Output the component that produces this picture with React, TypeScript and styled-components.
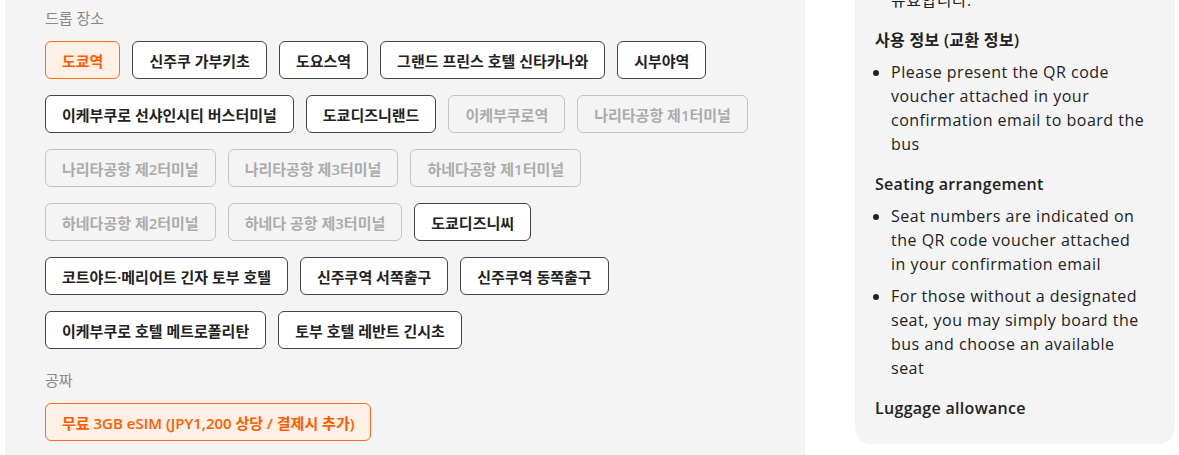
import React from 'react';
import styled, {createGlobalStyle, css} from 'styled-components';

type ChipState = 'default' | 'selected' | 'disabled';

interface ChipItem {
    label: string;
    state?: ChipState;
}

const dropOffs: ChipItem[] = [
    {label: '도쿄역', state: 'selected'},
    {label: '신주쿠 가부키초'},
    {label: '도요스역'},
    {label: '그랜드 프린스 호텔 신타카나와'},
    {label: '시부야역'},
    {label: '이케부쿠로 선샤인시티 버스터미널'},
    {label: '도쿄디즈니랜드'},
    {label: '이케부쿠로역', state: 'disabled'},
    {label: '나리타공항 제1터미널', state: 'disabled'},
    {label: '나리타공항 제2터미널', state: 'disabled'},
    {label: '나리타공항 제3터미널', state: 'disabled'},
    {label: '하네다공항 제1터미널', state: 'disabled'},
    {label: '하네다공항 제2터미널', state: 'disabled'},
    {label: '하네다 공항 제3터미널', state: 'disabled'},
    {label: '도쿄디즈니씨'},
    {label: '코트야드·메리어트 긴자 토부 호텔'},
    {label: '신주쿠역 서쪽출구'},
    {label: '신주쿠역 동쪽출구'},
    {label: '이케부쿠로 호텔 메트로폴리탄'},
    {label: '토부 호텔 레반트 긴시초'},
];

const freebies: ChipItem[] = [
    {label: '무료 3GB eSIM (JPY1,200 상당 / 결제시 추가)', state: 'selected'},
];

const GlobalStyle = createGlobalStyle`
  body {
    margin: 0;
    background: #ffffff;
    font-family: "Open Sans", "Noto Sans CJK KR", sans-serif;
    color: #222222;
  }
`;

const Page = styled.div`
  display: flex;
  align-items: flex-start;
  gap: 50px;
  height: 455px;
  overflow: hidden;
  padding-left: 5px;
`;

const OptionsPanel = styled.div`
  width: 800px;
  min-height: 480px;
  background: #f4f4f4;
  box-sizing: border-box;
  padding: 8px 40px 0;
  display: flex;
  flex-direction: column;
  gap: 21px;
`;

const Section = styled.section`
  display: flex;
  flex-direction: column;
  gap: 12px;
`;

const SectionLabel = styled.div`
  font-size: 15px;
  line-height: 21px;
  color: #888888;
`;

const ChipWrap = styled.div`
  display: flex;
  flex-wrap: wrap;
  gap: 16px 12px;
  max-width: 708px;
`;

const Chip = styled.button<{ $state: ChipState }>`
  height: 38px;
  box-sizing: border-box;
  padding: 0 16px;
  border-radius: 6px;
  border: 1px solid #444444;
  background: #ffffff;
  color: #222222;
  font-family: "Open Sans", "Noto Sans CJK KR", sans-serif;
  font-size: 15px;
  font-weight: 600;
  white-space: nowrap;
  cursor: pointer;

  ${({$state}) => $state === 'selected' && css`
    border-color: #ff6a13;
    background: #fff0e6;
    color: #ff5b00;
  `}

  ${({$state}) => $state === 'disabled' && css`
    border-color: #c4c4c4;
    background: transparent;
    color: #ababab;
    cursor: default;
  `}
`;

const InfoCard = styled.aside`
  width: 320px;
  box-sizing: border-box;
  background: #f4f4f4;
  border-radius: 0 0 16px 16px;
  padding: 0 28px 16px 20px;
  margin-top: -12px;
  font-size: 16px;
  line-height: 24px;
  letter-spacing: 0.5px;
  color: #222222;
`;

const Paragraph = styled.p`
  margin: 0;
  padding-left: 16px;
`;

const Heading = styled.h4`
  margin: 16px 0 8px;
  font-size: 16px;
  line-height: 24px;
  font-weight: 600;
  letter-spacing: 0.3px;
`;

const BulletList = styled.ul`
  margin: 0;
  padding-left: 16px;
  display: flex;
  flex-direction: column;
  gap: 8px;
`;

const Bullet = styled.li`
  padding-left: 0;
`;

const renderChips = (items: ChipItem[]) =>
    items.map((item) => (
        <Chip key={item.label} $state={item.state ?? 'default'} disabled={item.state === 'disabled'}>
            {item.label}
        </Chip>
    ));

export default function App() {
    return (
        <>
            <GlobalStyle/>
            <Page>
                <OptionsPanel>
                    <Section>
                        <SectionLabel>드롭 장소</SectionLabel>
                        <ChipWrap>{renderChips(dropOffs)}</ChipWrap>
                    </Section>
                    <Section>
                        <SectionLabel>공짜</SectionLabel>
                        <ChipWrap>{renderChips(freebies)}</ChipWrap>
                    </Section>
                </OptionsPanel>
                <InfoCard>
                    <Paragraph>유효합니다.</Paragraph>
                    <Heading>사용 정보 (교환 정보)</Heading>
                    <BulletList>
                        <Bullet>Please present the QR code voucher attached in your confirmation email to board the bus</Bullet>
                    </BulletList>
                    <Heading>Seating arrangement</Heading>
                    <BulletList>
                        <Bullet>Seat numbers are indicated on the QR code voucher attached in your confirmation email</Bullet>
                        <Bullet>For those without a designated seat, you may simply board the bus and choose an available seat</Bullet>
                    </BulletList>
                    <Heading>Luggage allowance</Heading>
                </InfoCard>
            </Page>
        </>
    );
}
